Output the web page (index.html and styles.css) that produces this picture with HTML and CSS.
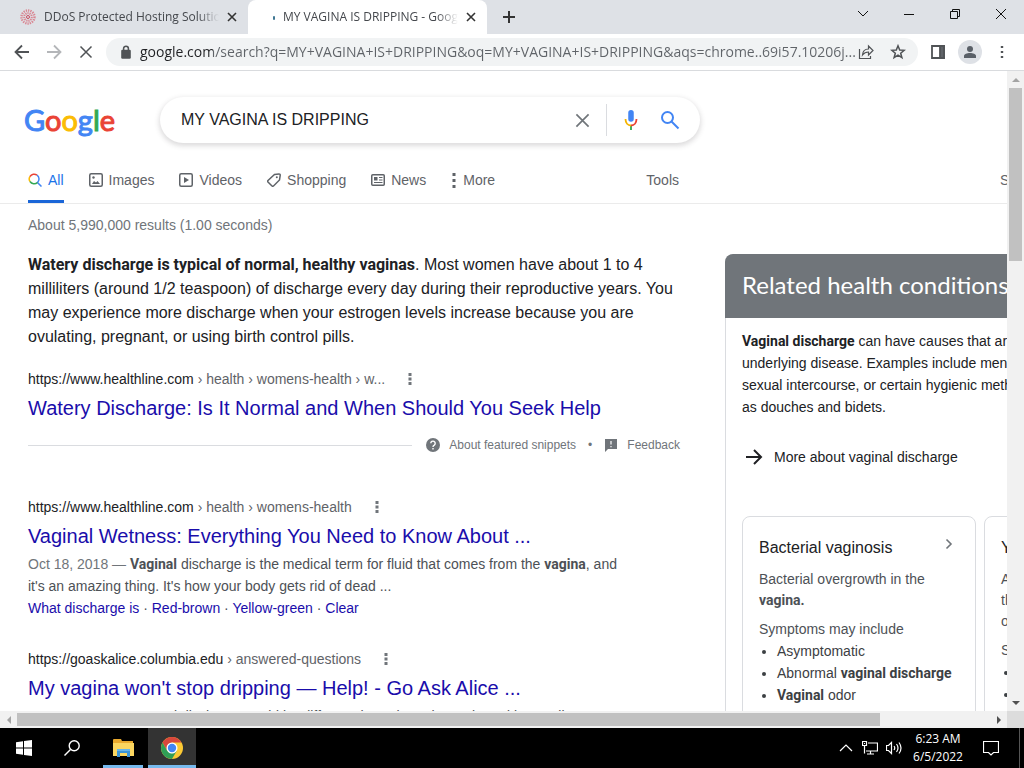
FILE: index.html
```html
<!DOCTYPE html>
<html lang="en">
<head>
<meta charset="utf-8">
<title>Google Search</title>
<link rel="stylesheet" href="styles.css">
</head>
<body>
<header class="tabstrip">
  <div class="tab">
    <svg class="favicon" viewBox="0 0 16 16" fill="none" stroke="#d98793"><circle cx="8" cy="8" r="6.5" stroke-width="2.4" stroke-dasharray="1.3 1"/><circle cx="8" cy="8" r="3.8" stroke-width="2" stroke-dasharray="1.3 .8"/><circle cx="8" cy="8" r="1.5" stroke="#c94c60"/></svg>
    <button class="tab-name">DDoS Protected Hosting Solutions</button>
    <button class="tab-close" aria-label="Close tab"><svg viewBox="0 0 10 10"><path d="M1 1l8 8M9 1L1 9"/></svg></button>
  </div>
  <div class="tab tab-active">
    <svg class="favicon" viewBox="0 0 16 16"><rect x="6" y="7" width="2" height="4" rx="1" fill="#3f7793"/></svg>
    <button class="tab-name">MY VAGINA IS DRIPPING - Google Search</button>
    <button class="tab-close" aria-label="Close tab"><svg viewBox="0 0 10 10"><path d="M1 1l8 8M9 1L1 9"/></svg></button>
  </div>
  <button class="new-tab" aria-label="New tab"><svg viewBox="0 0 12 12"><path d="M6 0v12M0 6h12"/></svg></button>
  <div class="window-buttons">
    <button aria-label="Search tabs"><svg viewBox="0 0 12 12"><path d="M1 3l5 5 5-5"/></svg></button>
    <button aria-label="Minimize"><svg viewBox="0 0 12 12"><path d="M1 6.5h10"/></svg></button>
    <button aria-label="Restore"><svg viewBox="0 0 12 12"><path d="M1.5 3.5h7v7h-7zM3.500 3.500v-2h7v7h-2"/></svg></button>
    <button aria-label="Close"><svg viewBox="0 0 12 12"><path d="M1 1l10 10M11 1L1 11"/></svg></button>
  </div>
</header>
<div class="toolbar">
  <button aria-label="Back"><svg viewBox="0 0 16 16"><path d="M15 8H2M8 1.500L1.500 8 8 14.500"/></svg></button>
  <button class="dim" aria-label="Forward"><svg viewBox="0 0 16 16"><path d="M1 8h13M8 1.500L14.500 8 8 14.500"/></svg></button>
  <button aria-label="Stop"><svg viewBox="0 0 16 16"><path d="M2.500 2.500l11 11M13.500 2.500l-11 11" stroke-width="1.500"/></svg></button>
  <div class="omnibox">
    <svg class="lock" viewBox="0 0 10 12"><rect x="1" y="4" width="8" height="7.500" rx="1" fill="#505356"/><path d="M3 5V3a2 2 0 0 1 4 0v2" fill="none" stroke="#505356" stroke-width="1.300"/></svg>
    <input class="address" aria-label="Address" value="google.com/search?q=MY+VAGINA+IS+DRIPPING&amp;oq=MY+VAGINA+IS+DRIPPING&amp;aqs=chrome..69i57.10206j...">
    <button aria-label="Share"><svg class="thin" viewBox="0 0 16 16"><path d="M1.500 5v9.500h11V12M4.500 11c.3-4 2.500-6 6-6V2L15 6.500 10.500 11V8C7.500 8 6 9 4.500 11z"/></svg></button>
    <button aria-label="Bookmark"><svg viewBox="0 0 16 16"><path d="M8 1.800l1.700 4.200 4.500.3-3.500 2.900 1.200 4.500L8 11.200l-3.900 2.500 1.200-4.500-3.500-2.900 4.500-.3z" stroke-width="1.500"/></svg></button>
  </div>
  <button aria-label="Side panel"><svg viewBox="0 0 16 16"><path d="M2 2h12v12H2z"/><path d="M10 2h4v12h-4z" fill="#5f6368"/></svg></button>
  <button class="avatar" aria-label="Profile"><svg viewBox="0 0 16 16"><circle cx="8" cy="5" r="3" fill="#5a6068" stroke="none"/><path d="M2 14v-2c0-2 3-3 6-3s6 1 6 3v2z" fill="#5a6068" stroke="none"/></svg></button>
  <button aria-label="Menu"><svg viewBox="0 0 16 16"><path d="M8 2v2M8 7v2M8 12v2" stroke-width="2.400"/></svg></button>
</div>
<div class="frame">
  <main class="viewport">
    <div class="page">
      <form class="search-head">
        <a class="logo" href="#" aria-label="Google"><span class="b">G</span><span class="r">o</span><span class="y">o</span><span class="b">g</span><span class="g">l</span><span class="r">e</span></a>
        <div class="searchbox">
          <input aria-label="Search" value="MY VAGINA IS DRIPPING">
          <button type="button" class="clear" aria-label="Clear"><svg viewBox="0 0 16 16"><path d="M1.500 1.500l13 13M14.500 1.500l-13 13" stroke="#70757a" stroke-width="1.800"/></svg></button>
          <button type="button" class="mic" aria-label="Search by voice"><svg viewBox="0 0 24 24"><rect x="9" y="1" width="6" height="13" rx="3" fill="#4285f4"/><path d="M11 18h2v5h-2z" fill="#34a853"/><path d="M6 11c0 4 2.500 7 6 7" fill="none" stroke="#f4b400" stroke-width="2"/><path d="M12 18c3.500 0 6-3 6-7" fill="none" stroke="#ea4335" stroke-width="2"/></svg></button>
          <button class="go" aria-label="Google Search"><svg viewBox="0 0 20 20" fill="none" stroke="#4285f4" stroke-width="2"><circle cx="7.500" cy="7.500" r="5.500"/><path d="M11.500 11.500l7 7"/></svg></button>
        </div>
      </form>
      <nav class="nav">
        <div class="nav-main">
          <a class="on" href="#"><svg viewBox="0 0 14 14"><path d="M2 8.500A4.500 4.500 0 0 1 2 3.500" stroke="#fbbc04"/><path d="M2 3.500a4.700 4.700 0 0 1 7-1.300" stroke="#ea4335"/><path d="M9 2.200a4.700 4.700 0 0 1 .5 7.300l4 4" stroke="#4285f4"/><path d="M9.500 9.500A4.900 4.900 0 0 1 2 8.500" stroke="#34a853"/></svg>All</a>
          <a href="#"><svg viewBox="0 0 14 14"><rect x=".75" y=".75" width="12.500" height="12.500" rx="1.500"/><path d="M3 11h8L8.500 8 7 9.500 5 8z" fill="#5f6368" stroke="none"/><circle cx="4.500" cy="4.500" r="1.200" fill="#5f6368" stroke="none"/></svg>Images</a>
          <a href="#"><svg viewBox="0 0 14 14"><rect x=".75" y=".75" width="12.500" height="12.500" rx="1.500"/><path d="M5 4l5 3-5 3z" fill="#5f6368" stroke="none"/></svg>Videos</a>
          <a href="#"><svg viewBox="0 0 14 14"><path d="M7.500 1.500L12 1q1.300 0 1.200 1.300L12.500 7 6.500 13q-.8.600-1.500 0L1 9q-.6-.8 0-1.500z"/><circle cx="9.800" cy="4.300" r="1" fill="#5f6368" stroke="none"/></svg>Shopping</a>
          <a href="#"><svg viewBox="0 0 14 14"><rect x=".75" y="1.750" width="12.500" height="10.500" rx="1"/><path d="M3 4h3.500v3.500H3z" fill="#5f6368" stroke="none"/><path d="M8 4.500h3.500M8 7h3.500M3 9.500h8.500" stroke-width="1.200"/></svg>News</a>
          <a class="more" href="#"><svg viewBox="0 0 4 14"><path d="M2 2v2M2 6v2M2 10v2" stroke-width="2"/></svg>More</a>
          <a class="tools" href="#">Tools</a>
        </div>
        <a class="safe" href="#">SafeSearch</a>
      </nav>
      <div class="columns">
        <section class="results">
          <p class="stats">About 5,990,000 results (1.00 seconds)</p>
          <article class="featured">
            <p class="answer"><b>Watery discharge is typical of normal, healthy vaginas</b>. Most women have about 1 to 4<br>milliliters (around 1/2 teaspoon) of discharge every day during their reproductive years. You may experience more discharge when your estrogen levels increase because you are ovulating, pregnant, or using birth control pills.</p>
            <div class="cite"><span>https://www.healthline.com<i> › health › womens-health › w...</i></span><button aria-label="About this result"><svg viewBox="0 0 4 12"><path d="M2 0v3M2 4.500v3M2 9v3"/></svg></button></div>
            <h3><a href="#">Watery Discharge: Is It Normal and When Should You Seek Help</a></h3>
            <div class="snippet-foot">
              <hr>
              <a href="#"><svg viewBox="0 0 14 14"><circle cx="7" cy="7" r="7" fill="#70757a"/><path d="M4.800 5.300a2.200 2.200 0 1 1 3.500 1.800Q7 7.800 7 9" fill="none" stroke="#fff" stroke-width="1.400"/><path d="M6.300 10h1.400v1.500H6.300z" fill="#fff"/></svg>About featured snippets</a>
              <span>•</span>
              <a href="#"><svg viewBox="0 0 14 14"><path d="M1 1h12v10H4l-3 3z" fill="#70757a"/><path d="M6.400 3h1.200v3.500H6.400zM6.400 8h1.200v1.300H6.400z" fill="#fff"/></svg>Feedback</a>
            </div>
          </article>
          <article class="result">
            <div class="cite"><span>https://www.healthline.com<i> › health › womens-health</i></span><button aria-label="About this result"><svg viewBox="0 0 4 12"><path d="M2 0v3M2 4.500v3M2 9v3"/></svg></button></div>
            <h3><a href="#">Vaginal Wetness: Everything You Need to Know About ...</a></h3>
            <p><span class="date">Oct 18, 2018 — </span><b>Vaginal</b> discharge is the medical term for fluid that comes from the <b>vagina</b>, and<br>it's an amazing thing. It's how your body gets rid of dead ...</p>
            <p class="links"><a href="#">What discharge is</a> · <a href="#">Red-brown</a> · <a href="#">Yellow-green</a> · <a href="#">Clear</a></p>
          </article>
          <article class="result">
            <div class="cite"><span>https://goaskalice.columbia.edu<i> › answered-questions</i></span><button aria-label="About this result"><svg viewBox="0 0 4 12"><path d="M2 0v3M2 4.500v3M2 9v3"/></svg></button></div>
            <h3><a href="#">My vagina won't stop dripping — Help! - Go Ask Alice ...</a></h3>
            <p><span class="date">Aug 11, 2021 — </span>Normal discharge could be different throughout the cycle and is usually ...</p>
          </article>
        </section>
        <aside class="panel">
          <h2>Related health conditions</h2>
          <div class="panel-body">
            <p class="about"><b>Vaginal discharge</b> can have causes that aren't due to<br>underlying disease. Examples include menstruation,<br>sexual intercourse, or certain hygienic methods, such<br>as douches and bidets.</p>
            <a class="more-about" href="#"><svg viewBox="0 0 18 16"><path d="M1 8h15M9 1l7 7-7 7"/></svg>More about vaginal discharge</a>
            <div class="cards">
              <section class="card">
                <h4><a href="#">Bacterial vaginosis</a><svg viewBox="0 0 8 12"><path d="M1.500 1.500L6 6l-4.500 4.500"/></svg></h4>
                <p>Bacterial overgrowth in the <b>vagina.</b></p>
                <p class="symptoms">Symptoms may include</p>
                <ul><li>Asymptomatic</li><li>Abnormal <b>vaginal discharge</b></li><li><b>Vaginal</b> odor</li></ul>
              </section>
              <section class="card">
                <h4><a href="#">Yeast infection</a></h4>
                <p>A fungal infection<br>that is common<br>or recurring.</p>
                <p class="symptoms">Symptoms may include</p>
                <ul><li>Itching</li><li>Irritation</li></ul>
              </section>
            </div>
          </div>
        </aside>
      </div>
    </div>
  </main>
  <div class="vscroll">
    <button class="faded" aria-label="Scroll up"><svg viewBox="0 0 8 8"><path d="M0 6l4-4 4 4z"/></svg></button>
    <div class="vthumb"></div>
    <button class="down" aria-label="Scroll down"><svg viewBox="0 0 8 8"><path d="M0 2l4 4 4-4z"/></svg></button>
  </div>
</div>
<div class="hscroll">
  <button class="faded" aria-label="Scroll left"><svg viewBox="0 0 8 8"><path d="M6 0L2 4l4 4z"/></svg></button>
  <div class="htrack"><div class="hthumb"></div></div>
  <button aria-label="Scroll right"><svg viewBox="0 0 8 8"><path d="M2 0l4 4-4 4z"/></svg></button>
  <div class="corner"></div>
</div>
<footer class="taskbar">
  <button aria-label="Start"><svg viewBox="0 0 16 16" fill="#fff"><path d="M0 2.200L7 1.200v6.300H0zM8 1l8-1v7.500H8zM0 8.500h7v6.300l-7-1zM8 8.500h8V16l-8-1z"/></svg></button>
  <button aria-label="Search"><svg viewBox="0 0 16 16" fill="none" stroke="#fff" stroke-width="1.400"><circle cx="10.200" cy="5.800" r="5"/><path d="M6.500 9.500L.5 15.500"/></svg></button>
  <button class="open" aria-label="File Explorer"><svg class="big" viewBox="0 0 22 22"><path d="M1 3q0-1 1-1h7l1 2h11v15H1z" fill="#e9a92e"/><path d="M1 6h21v13H1z" fill="#fbd660"/><path d="M5 12h13v8h-3v-4H8v4H5z" fill="#3b94d6"/><path d="M5 12h13v2H5z" fill="#67b5e9"/></svg></button>
  <button class="open current" aria-label="Chrome"><svg class="big" viewBox="0 0 22 22"><circle cx="11" cy="11" r="11" fill="#fbc934"/><path d="M1.500 5.500A11 11 0 0 1 20.500 5.500H11L6.200 13.700z" fill="#d8473c"/><path d="M1.500 5.500A11 11 0 0 0 11 22l4.800-8.200-4.800 2.700-4.800-2.800z" fill="#2f9e56"/><circle cx="11" cy="11" r="5.500" fill="#fff"/><circle cx="11" cy="11" r="4.200" fill="#4285f4"/></svg></button>
  <div class="tray">
    <button aria-label="Show hidden icons"><svg viewBox="0 0 16 16"><path d="M2 11l6-6 6 6"/></svg></button>
    <button aria-label="Network"><svg viewBox="0 0 16 16"><path d="M6 3h9.500v8H4M.5 1.500h4v4h-4zM2.500 5.500v8M5 14h7M8.500 11v3M2 3.500h1"/></svg></button>
    <button aria-label="Volume"><svg viewBox="0 0 16 16"><path d="M.5 5.500h2l3-3v11l-3-3h-2zM8 6q1.500 2 0 4M10.500 4q3 4 0 8M13 2.500q4 5.500 0 11"/></svg></button>
    <time>6:23 AM<br>6/5/2022</time>
    <button class="notes" aria-label="Notifications"><svg viewBox="0 0 16 16"><path d="M.5 1.500h15v11h-5L8 15l-2.500-2.500h-5z"/></svg></button>
  </div>
</footer>
</body>
</html>
```
FILE: styles.css
```css
* { box-sizing: border-box; }
body { margin: 0; height: 100vh; display: flex; flex-direction: column; overflow: hidden; background: #fff; font: 14px/22px "Liberation Sans", Arial, sans-serif; color: #4d5156; }
button { border: 0; padding: 0; background: none; font: inherit; color: inherit; display: flex; align-items: center; justify-content: center; flex: none; }
input { border: 0; padding: 0; background: none; font: inherit; outline: 0; min-width: 0; }
p, h2, h3, h4, ul { margin: 0; padding: 0; font-weight: 400; }
a { color: #1a0dab; text-decoration: none; }
b { font-family: Roboto, sans-serif; }
svg { flex: none; display: block; }

.tabstrip { flex: none; height: 34px; display: flex; background: #dee1e6; }
.tab { width: 248px; display: flex; align-items: center; padding: 0 11px 0 20px; }
.tab-active { width: 239px; background: #fff; border-radius: 8px 8px 0 0; padding-left: 19px; }
.favicon { width: 16px; height: 16px; }
.tab-name { flex: 1; min-width: 0; overflow: hidden; justify-content: flex-start; white-space: nowrap; margin: 0 8px; font: 12px/18px "Open Sans", sans-serif; color: #45484d; -webkit-mask-image: linear-gradient(90deg, #000 88%, transparent); mask-image: linear-gradient(90deg, #000 88%, transparent); }
.tab-active .tab-name { margin-left: 0; }
.tab-close { width: 10px; height: 10px; }
.tab-close svg { width: 10px; stroke: #333; stroke-width: 1.6; }
.new-tab { width: 44px; }
.new-tab svg { width: 12px; stroke: #333; stroke-width: 2; }
.window-buttons { margin-left: auto; display: flex; height: 28px; }
.window-buttons button { width: 46px; }
.window-buttons svg { width: 12px; fill: none; stroke: #111; stroke-width: 1; }

.toolbar { flex: none; height: 37px; display: flex; align-items: center; gap: 8px; padding: 0 10px; border-bottom: 1px solid #d9dbde; }
.toolbar button { width: 24px; height: 24px; }
.toolbar svg { width: 16px; fill: none; stroke: #505356; stroke-width: 1.8; }
.toolbar .dim svg { stroke: #b4b6b9; }
.toolbar .thin { stroke-width: 1.2; }
.omnibox { flex: 1; min-width: 0; height: 28px; display: flex; align-items: center; gap: 8px; padding: 0 8px 0 14px; border-radius: 14px; background: #f1f3f4; }
.toolbar .lock { width: 12px; stroke: none; }
.address { flex: 1; margin: 0 -12px 0 0; font: 14px/20px "Open Sans", sans-serif; color: transparent; background: linear-gradient(90deg, #202124 73px, #5f6368 73px); -webkit-background-clip: text; background-clip: text; }
.toolbar .avatar { width: 24px; height: 24px; border-radius: 12px; background: #dee1e6; }

.frame { flex: 1; min-height: 0; display: flex; }
.viewport { flex: 1; min-width: 0; overflow: hidden; }
.page { min-width: 1200px; }
.search-head { display: flex; align-items: center; padding: 26px 0 0 24px; }
.logo { width: 136px; font: 29px/46px Lato, sans-serif; -webkit-text-stroke: 1px; }
.b { color: #4285f4; } .r { color: #ea4335; } .y { color: #fbbc05; } .g { color: #34a853; }
.searchbox { width: 540px; height: 46px; display: flex; align-items: center; padding: 0 15px 0 21px; border-radius: 23px; box-shadow: 0 2px 5px 1px rgba(64,60,67,.18); }
.searchbox input { flex: 1; font-size: 16px; line-height: 22px; color: #202124; }
.clear { width: 48px; height: 24px; }
.clear svg { width: 15px; fill: none; }
.mic { width: 49px; height: 32px; border-left: 1px solid #dadce0; }
.mic svg { width: 22px; }
.go { width: 30px; height: 30px; }
.go svg { width: 20px; }

.nav { display: flex; height: 61px; padding: 14px 0 0 28px; border-bottom: 1px solid #ebebeb; line-height: 16px; }
.nav-main { width: 651px; display: flex; gap: 25px; }
.nav a { display: flex; align-items: center; gap: 6px; color: #5f6368; }
.nav svg { width: 14px; fill: none; stroke: #5f6368; stroke-width: 1.5; }
.nav .on { color: #1a73e8; border-bottom: 3px solid #1a66d8; padding-top: 3px; }
.nav .more svg { width: 6px; }
.nav .tools { margin-left: auto; }
.nav .safe { margin-left: 321px; }

.columns { display: flex; gap: 45px; padding-left: 28px; }
.results { width: 652px; flex: none; }
.stats { line-height: 43px; color: #70757a; }
.answer { padding: 6px 0 19px; font-size: 16px; line-height: 24px; color: #202124; }
.cite { display: flex; align-items: center; gap: 23px; line-height: 22px; color: #202124; }
.cite i { font-style: normal; color: #5f6368; }
.cite svg { width: 4px; stroke: #70757a; stroke-width: 3; }
.results h3 { font-size: 20px; line-height: 26px; padding: 5px 0 4px; white-space: nowrap; }
.snippet-foot { display: flex; align-items: center; height: 40px; margin-bottom: 31px; font-size: 12px; color: #70757a; }
.snippet-foot hr { flex: 1; border: 0; height: 1px; background: #dadce0; margin: 0 14px 0 0; }
.snippet-foot a { display: flex; align-items: center; gap: 9px; color: #70757a; }
.snippet-foot span { margin: 0 12px; }
.snippet-foot svg { width: 14px; }
.result { margin-bottom: 29px; }
.result p { width: 600px; line-height: 22px; }
.date { color: #70757a; }

.panel { flex: 1; margin-top: 50px; border: 1px solid #dadce0; border-radius: 8px 8px 0 0; white-space: nowrap; }
.panel h2 { margin: -1px 0 0 -1px; padding: 0 17px 2px; border-radius: 8px 8px 0 0; background: #70757a; color: #fff; font: 24px/62px Lato, sans-serif; }
.panel-body { padding: 12px 16px 0; color: #202124; }
.more-about { display: flex; align-items: center; gap: 11px; padding: 28px 3px 48px; color: #202124; }
.more-about svg { width: 18px; fill: none; stroke: #202124; stroke-width: 2; }
.cards { display: flex; gap: 8px; }
.card { width: 234px; flex: none; padding: 20px 16px; border: 1px solid #dadce0; border-radius: 8px; line-height: 21px; color: #4d5156; }
.card h4 { display: flex; align-items: center; justify-content: space-between; font-size: 16px; line-height: 22px; padding-bottom: 10px; }
.card h4 a { color: #202124; }
.card h4 svg { width: 8px; margin: 0 6px 8px 0; fill: none; stroke: #70757a; stroke-width: 1.6; }
.card p { white-space: normal; }
.card .symptoms { padding-top: 8px; white-space: nowrap; }
.card ul { padding-left: 18px; line-height: 22px; color: #3c4043; }

.vscroll, .hscroll { background: #f1f1f1; display: flex; flex: none; }
.vscroll { width: 17px; flex-direction: column; align-items: center; }
.vscroll button, .hscroll button { width: 17px; height: 17px; }
.vscroll svg, .hscroll svg { width: 8px; fill: #505050; }
.faded svg { fill: #a3a3a3; }
.vthumb { width: 13px; height: 27%; background: #c1c1c1; }
.vscroll .down { margin-top: auto; }
.hscroll { height: 17px; align-items: center; }
.htrack { flex: 1; }
.hthumb { width: 88.7%; height: 13px; background: #c1c1c1; }
.corner { width: 17px; height: 17px; background: #dcdcdc; }

.taskbar { flex: none; height: 40px; display: flex; background: #000; color: #fff; }
.taskbar > button { width: 48px; }
.taskbar svg { width: 16px; }
.taskbar .big { width: 22px; }
.taskbar .open { margin-left: 7px; width: 40px; border: solid #76b9ed; border-width: 0 0 3px; padding-top: 3px; }
.taskbar .current { width: 48px; margin-left: 5px; background: #333; }
.tray { margin-left: auto; display: flex; align-items: center; padding-right: 7px; border-right: 1px solid #555; margin-right: 4px; }
.tray button { width: 24px; height: 40px; }
.tray svg { fill: none; stroke: #fff; stroke-width: 1.2; }
.tray time { width: 64px; font: 12px/18px "Open Sans", sans-serif; text-align: center; }
.tray .notes { width: 42px; }
```
